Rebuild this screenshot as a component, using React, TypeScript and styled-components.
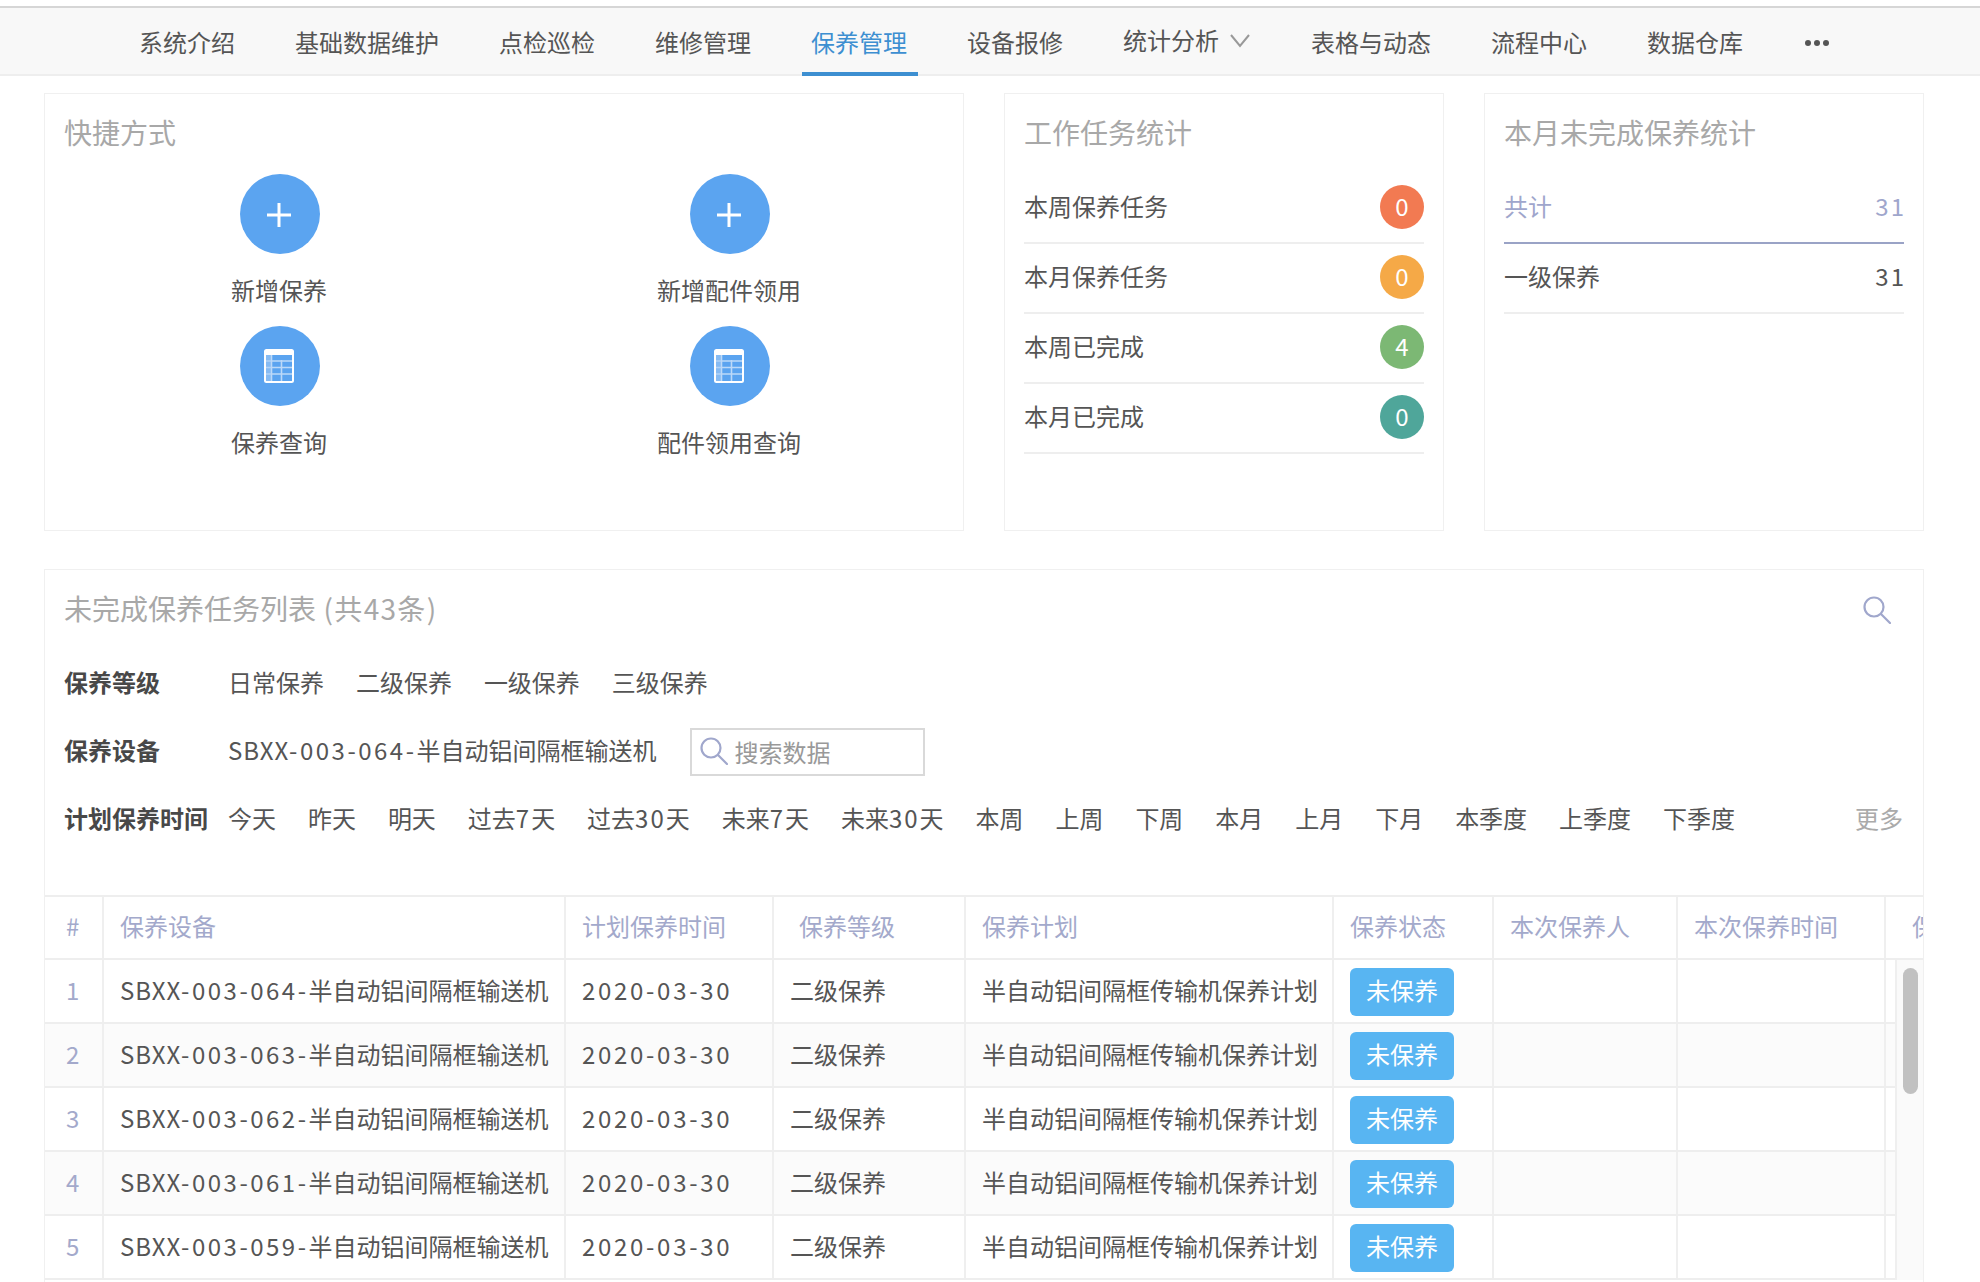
import styled, { createGlobalStyle } from "styled-components";

const GlobalStyle = createGlobalStyle`
    html, body {
        margin: 0;
        height: 100%;
        overflow: hidden;
        background: #fff;
    }

    * {
        box-sizing: border-box;
    }

    body {
        font-family: "Noto Sans CJK SC", "Noto Sans", sans-serif;
        font-size: 24px;
        color: #555;
    }
`;

const Page = styled.div`
    height: 100vh;
    overflow: hidden;
    padding-top: 6px;
`;

const Nav = styled.nav`
    display: flex;
    align-items: stretch;
    height: 70px;
    padding-left: 109px;
    background: #f8f8f8;
    border-top: 2px solid #d6d6d6;
    border-bottom: 2px solid #eee;
`;

const NavItem = styled.div<{ $active?: boolean; $raised?: boolean }>`
    position: relative;
    display: flex;
    align-items: center;
    padding: 0 30px ${(p) => (p.$raised ? "4px" : "0")};
    white-space: nowrap;
    color: ${(p) => (p.$active ? "#3d8fd1" : "#555")};

    ${(p) =>
        p.$active &&
        `&::after {
            content: "";
            position: absolute;
            left: 21px;
            right: 19px;
            bottom: -2px;
            height: 4px;
            background: #3d8fd1;
        }`}
`;

const Chevron = styled.svg`
    width: 20px;
    height: 14px;
    margin: 4px 1px 0 11px;
    fill: none;
    stroke: #999;
    stroke-width: 2;
`;

const Dots = styled.span`
    display: flex;
    gap: 3px;
    margin: 4px 0 0 2px;

    i {
        width: 6px;
        height: 6px;
        border-radius: 50%;
        background: #555;
    }
`;

const Content = styled.main`
    padding: 17px 56px 0 44px;
`;

const TopRow = styled.div`
    display: grid;
    grid-template-columns: 920px 440px 440px;
    gap: 40px;
    height: 438px;
`;

const Card = styled.section`
    border: 1px solid #f0f0f0;
    background: #fff;
`;

const SideCard = styled(Card)`
    padding: 0 19px;
`;

const CardTitle = styled.h2`
    display: flex;
    align-items: center;
    justify-content: space-between;
    height: 80px;
    margin: 0;
    padding-bottom: 4px;
    font-size: 28px;
    font-weight: 400;
    color: #a8a8a8;
`;

const TitleCount = styled.span`
    letter-spacing: 1.3px;
`;

const ShortcutCard = styled(Card)`
    padding: 0 10px;

    ${CardTitle} {
        padding-left: 9px;
    }
`;

const ShortcutGrid = styled.div`
    display: grid;
    grid-template-columns: 450px 450px;
    grid-auto-rows: 152px;
`;

const Shortcut = styled.div`
    display: flex;
    flex-direction: column;
    align-items: center;
    gap: 19px;
`;

const ShortcutCircle = styled.span`
    display: flex;
    align-items: center;
    justify-content: center;
    width: 80px;
    height: 80px;
    padding-right: 2px;
    border-radius: 50%;
    background: #5ba4f0;
`;

const ShortcutLabel = styled.span`
    margin-right: 2px;
    line-height: 34px;
`;

const PlusGlyph = styled.svg`
    width: 24px;
    height: 24px;
    margin-top: 2px;
    fill: none;
    stroke: #fff;
    stroke-width: 3;
`;

const StatRow = styled.div<{ $head?: boolean }>`
    display: flex;
    align-items: center;
    justify-content: space-between;
    height: 70px;
    padding-bottom: 5px;
    border-bottom: 2px solid ${(p) => (p.$head ? "#9aa3c6" : "#eee")};
    color: ${(p) => (p.$head ? "#9fa6cc" : "#555")};
`;

const StatNumber = styled.span`
    margin-right: -2px;
    letter-spacing: 2px;
`;

const Badge = styled.span<{ $color: string }>`
    display: flex;
    align-items: center;
    justify-content: center;
    width: 44px;
    height: 44px;
    margin-top: 3px;
    padding-bottom: 3px;
    border-radius: 50%;
    color: #fff;
    background: ${(p) => p.$color};
`;

const ListCard = styled(Card)`
    margin-top: 38px;
    height: 760px;
    overflow: hidden;
`;

const ListHead = styled.div`
    padding: 0 32px 0 19px;
`;

const HeadSearch = styled.span`
    display: flex;
    margin-top: 4px;
`;

const Filters = styled.div`
    padding: 0 20px 0 19px;
    margin-top: -1px;
    margin-bottom: 42px;
`;

const FilterRow = styled.div`
    display: flex;
    align-items: center;
    height: 68px;
    padding-bottom: 4px;
    white-space: nowrap;
`;

const FilterLabel = styled.span`
    flex: 0 0 164px;
    font-weight: 700;
    color: #484848;
`;

const Options = styled.div`
    display: flex;
    gap: 31.95px;
`;

const Digits = styled.span`
    letter-spacing: 2px;
`;

const More = styled.span`
    margin-left: auto;
    color: #aaa;
`;

const SearchBox = styled.div`
    display: flex;
    align-items: center;
    gap: 7px;
    width: 235px;
    height: 48px;
    margin: 6px 0 0 33px;
    padding: 0 0 2px 8px;
    border: 2px solid #d9d9d9;
    color: #999;
`;

const Latin = styled.span<{ $spacing: number }>`
    letter-spacing: ${(p) => p.$spacing}px;
`;

const TableHead = styled.div`
    display: grid;
    grid-template-columns: 59px 462px 208px 192px 368px 160px 184px 208px 1fr;
    height: 65px;
    border-top: 2px solid #eee;
    border-bottom: 2px solid #eee;
    color: #a3a9cb;
    white-space: nowrap;
    overflow: hidden;

    & > div {
        padding-bottom: 5px;
    }
`;

const TableBody = styled.div`
    display: flex;
    align-items: stretch;
`;

const Rows = styled.div`
    flex: 1;
`;

const Row = styled.div<{ $striped: boolean }>`
    display: grid;
    grid-template-columns: 59px 462px 208px 192px 368px 160px 184px 208px 1fr;
    height: 64px;
    border-bottom: 2px solid #eee;
    background: ${(p) => (p.$striped ? "#fbfbfb" : "#fff")};
    white-space: nowrap;
`;

const Cell = styled.div<{ $index?: boolean; $indent?: number }>`
    display: flex;
    align-items: center;
    padding-left: ${(p) => (p.$index ? 21 : 16) + (p.$indent ?? 0)}px;
    padding-bottom: 4px;
    border-right: 2px solid #efefef;
    overflow: hidden;
    color: ${(p) => (p.$index ? "#a3a9cb" : "inherit")};
`;

const LastHeadCell = styled.div`
    display: flex;
    align-items: center;
    padding-left: 26px;
`;

const StatusTag = styled.span`
    display: flex;
    align-items: center;
    justify-content: center;
    width: 104px;
    height: 48px;
    margin-top: 6px;
    padding-bottom: 5px;
    border-radius: 6px;
    color: #fff;
    background: #58b5f2;
`;

const ScrollTrack = styled.div`
    flex: 0 0 28px;
    padding: 8px 5px 0 6px;
    border-left: 2px solid #efefef;
    background: #fafafa;
`;

const ScrollThumb = styled.div`
    height: 126px;
    border-radius: 8px;
    background: #c1c1c1;
`;

const navItems = ["系统介绍", "基础数据维护", "点检巡检", "维修管理", "保养管理", "设备报修", "统计分析", "表格与动态", "流程中心", "数据仓库"];

const shortcuts = [
    { label: "新增保养", icon: "plus" },
    { label: "新增配件领用", icon: "plus" },
    { label: "保养查询", icon: "table" },
    { label: "配件领用查询", icon: "table" },
];

const taskStats = [
    { label: "本周保养任务", value: 0, color: "#f27a52" },
    { label: "本月保养任务", value: 0, color: "#f5a947" },
    { label: "本周已完成", value: 4, color: "#7cb874" },
    { label: "本月已完成", value: 0, color: "#4fa69a" },
];

const levels = ["日常保养", "二级保养", "一级保养", "三级保养"];
const times = ["今天", "昨天", "明天", "过去7天", "过去30天", "未来7天", "未来30天", "本周", "上周", "下周", "本月", "上月", "下月", "本季度", "上季度", "下季度"];
const headers = ["#", "保养设备", "计划保养时间", "保养等级", "保养计划", "保养状态", "本次保养人", "本次保养时间"];
const devices = ["064", "063", "062", "061", "059"];

function PlusIcon() {
    return (
        <PlusGlyph viewBox="0 0 24 24">
            <path d="M12 0v24M0 12h24" />
        </PlusGlyph>
    );
}

function TableIcon() {
    return (
        <svg width="30" height="34" viewBox="0 0 30 34" fill="none">
            <path d="M7.5 6v26M17.5 11v21M2 12h26M2 18.5h26M2 25h26" stroke="#bcd9f8" strokeWidth="1.6" />
            <rect x="2" y="6" width="5" height="26" fill="#a9cdf6" opacity="0.55" />
            <rect x="1" y="1" width="28" height="32" rx="1.5" stroke="#fff" strokeWidth="2" />
            <rect x="1" y="1" width="28" height="5" fill="#fff" />
        </svg>
    );
}

function SearchIcon({ size }: { size: number }) {
    return (
        <svg width={size} height={size} viewBox="0 0 28 28" fill="none" stroke="#a0a7cc" strokeWidth="2.2">
            <circle cx="11" cy="11" r="9.5" />
            <path d="M18 18l9 9" strokeLinecap="round" />
        </svg>
    );
}

// digits in the time filters sit wider apart than the CJK around them
function TimeOption({ text }: { text: string }) {
    const parts = text.split(/(\d+)/);
    return <span>{parts.map((part, i) => (i % 2 === 1 ? <Digits key={i}>{part}</Digits> : part))}</span>;
}

function DeviceName({ code }: { code: string }) {
    return (
        <span>
            <Latin $spacing={0.9}>SBXX</Latin>
            <Latin $spacing={2.5}>-003-{code}-</Latin>半自动铝间隔框输送机
        </span>
    );
}

export default function App() {
    return (
        <Page>
            <GlobalStyle />
            <Nav>
                {navItems.map((item) => (
                    <NavItem key={item} $active={item === "保养管理"} $raised={item === "统计分析"}>
                        {item}
                        {item === "统计分析" && (
                            <Chevron viewBox="0 0 20 14">
                                <path d="M1 1l9 11 9-11" />
                            </Chevron>
                        )}
                    </NavItem>
                ))}
                <NavItem>
                    <Dots>
                        <i />
                        <i />
                        <i />
                    </Dots>
                </NavItem>
            </Nav>
            <Content>
                <TopRow>
                    <ShortcutCard>
                        <CardTitle>快捷方式</CardTitle>
                        <ShortcutGrid>
                            {shortcuts.map((s) => (
                                <Shortcut key={s.label}>
                                    <ShortcutCircle>{s.icon === "plus" ? <PlusIcon /> : <TableIcon />}</ShortcutCircle>
                                    <ShortcutLabel>{s.label}</ShortcutLabel>
                                </Shortcut>
                            ))}
                        </ShortcutGrid>
                    </ShortcutCard>
                    <SideCard>
                        <CardTitle>工作任务统计</CardTitle>
                        {taskStats.map((s) => (
                            <StatRow key={s.label}>
                                {s.label}
                                <Badge $color={s.color}>{s.value}</Badge>
                            </StatRow>
                        ))}
                    </SideCard>
                    <SideCard>
                        <CardTitle>本月未完成保养统计</CardTitle>
                        <StatRow $head>
                            共计<StatNumber>31</StatNumber>
                        </StatRow>
                        <StatRow>
                            一级保养<StatNumber>31</StatNumber>
                        </StatRow>
                    </SideCard>
                </TopRow>
                <ListCard>
                    <ListHead>
                        <CardTitle>
                            <span>
                                未完成保养任务列表<TitleCount> (共43条)</TitleCount>
                            </span>
                            <HeadSearch>
                                <SearchIcon size={28} />
                            </HeadSearch>
                        </CardTitle>
                    </ListHead>
                    <Filters>
                        <FilterRow>
                            <FilterLabel>保养等级</FilterLabel>
                            <Options>
                                {levels.map((l) => (
                                    <span key={l}>{l}</span>
                                ))}
                            </Options>
                        </FilterRow>
                        <FilterRow>
                            <FilterLabel>保养设备</FilterLabel>
                            <DeviceName code="064" />
                            <SearchBox>
                                <SearchIcon size={28} />
                                搜索数据
                            </SearchBox>
                        </FilterRow>
                        <FilterRow>
                            <FilterLabel>计划保养时间</FilterLabel>
                            <Options>
                                {times.map((t) => (
                                    <TimeOption key={t} text={t} />
                                ))}
                            </Options>
                            <More>更多</More>
                        </FilterRow>
                    </Filters>
                    <TableHead>
                        {headers.map((h, i) => (
                            <Cell key={h} $index={i === 0} $indent={h === "保养等级" ? 9 : 0}>
                                {h}
                            </Cell>
                        ))}
                        <LastHeadCell>保养人</LastHeadCell>
                    </TableHead>
                    <TableBody>
                        <Rows>
                            {devices.map((d, i) => (
                                <Row key={d} $striped={i % 2 === 1}>
                                    <Cell $index>{i + 1}</Cell>
                                    <Cell>
                                        <DeviceName code={d} />
                                    </Cell>
                                    <Cell>
                                        <Latin $spacing={2.7}>2020-03-30</Latin>
                                    </Cell>
                                    <Cell>二级保养</Cell>
                                    <Cell>半自动铝间隔框传输机保养计划</Cell>
                                    <Cell>
                                        <StatusTag>未保养</StatusTag>
                                    </Cell>
                                    <Cell />
                                    <Cell />
                                    <div />
                                </Row>
                            ))}
                        </Rows>
                        <ScrollTrack>
                            <ScrollThumb />
                        </ScrollTrack>
                    </TableBody>
                </ListCard>
            </Content>
        </Page>
    );
}
